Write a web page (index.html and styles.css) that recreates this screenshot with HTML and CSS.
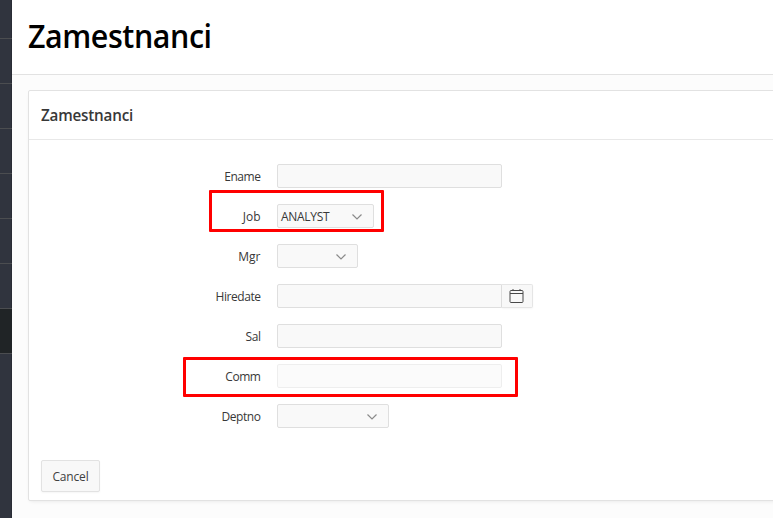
FILE: index.html
```html
<!DOCTYPE html>
<html lang="sk">
<head>
<meta charset="utf-8">
<title>Zamestnanci</title>
<link rel="stylesheet" href="styles.css">
</head>
<body>
<nav class="sidebar">
  <div class="nav-item first"></div>
  <div class="nav-item"></div>
  <div class="nav-item"></div>
  <div class="nav-item"></div>
  <div class="nav-item"></div>
  <div class="nav-item"></div>
  <div class="nav-item"></div>
  <div class="nav-item active"></div>
</nav>
<main class="main">
  <header class="title-bar"><h1>Zamestnanci</h1></header>
  <section class="region">
    <div class="region-header"><h2>Zamestnanci</h2></div>
    <form class="form">
      <div class="row"><label>Ename</label><div class="field"></div></div>
      <div class="row"><label class="wide">Job</label><div class="field select job"><span>ANALYST</span><svg class="chevron" viewBox="0 0 10 6"><path d="M.5.5 5 5 9.500.5"/></svg></div><div class="marker marker-job"></div></div>
      <div class="row"><label class="wide">Mgr</label><div class="field select mgr"><svg class="chevron" viewBox="0 0 10 6"><path d="M.5.5 5 5 9.500.5"/></svg></div></div>
      <div class="row"><label>Hiredate</label><div class="field date"></div><div class="picker"><svg viewBox="0 0 15 15"><path d="M2 2.500h11q1 0 1 1v10q0 1-1 1h-11q-1 0-1-1v-10q0-1 1-1zM1 5.500h13M4 1v2M11 1v2"/></svg></div></div>
      <div class="row"><label>Sal</label><div class="field"></div></div>
      <div class="row"><label>Comm</label><div class="field disabled"></div><div class="marker marker-comm"></div></div>
      <div class="row"><label>Deptno</label><div class="field select dept"><svg class="chevron" viewBox="0 0 10 6"><path d="M.5.5 5 5 9.500.5"/></svg></div></div>
    </form>
    <div class="buttons"><button type="button">Cancel</button></div>
  </section>
</main>
</body>
</html>
```
FILE: styles.css
```css
* { box-sizing: border-box; }
body {
  margin: 0;
  height: 518px;
  display: flex;
  overflow: hidden;
  background: #fcfcfc;
  color: #383838;
  font: 12px/16px "Open Sans", "Noto Sans", sans-serif;
}
.sidebar { width: 12px; flex: none; background: #30343e; box-shadow: inset -1px 0 #292c35; }
.nav-item { height: 45px; border-bottom: 1px solid #4b4d50; }
.nav-item.first { height: 39px; }
.nav-item.active { background: #202426; }
.main { flex: 1; min-width: 0; }
.title-bar {
  height: 75px;
  padding: 14px 16px 0;
  background: #fff;
  border-bottom: 1px solid #e2e2e2;
}
h1 { margin: 0; font-size: 32px; line-height: 44px; font-weight: 600; color: #000; letter-spacing: -.45px; transform: scaleX(.95); transform-origin: left; }
.region {
  height: 411px;
  margin: 15px -10px 0 16px;
  background: #fff;
  border: 1px solid #e2e2e2;
  border-radius: 2px;
  box-shadow: 0 2px 4px -2px rgba(0, 0, 0, .1);
}
.region-header { height: 49px; padding: 12px 12px 0; border-bottom: 1px solid #e8e8e8; }
h2 { margin: 0; font-size: 16px; line-height: 24px; font-weight: 600; letter-spacing: -.2px; transform: scaleX(.95); transform-origin: left; }
.form { padding-top: 16px; }
.row { position: relative; height: 40px; display: flex; align-items: center; }
.row label { width: 231.5px; margin-right: 16.5px; text-align: right; padding-top: 1px; letter-spacing: -.45px; }
.row label.wide { letter-spacing: 0; }
.field {
  width: 225px;
  height: 24px;
  background: #f9f9f9;
  border: 1px solid #dfdfdf;
  border-radius: 2px;
}
.select { display: flex; align-items: center; padding: 0 11px 0 3px; }
.select span { letter-spacing: -.3px; padding-top: 1px; }
.job { width: 97px; }
.mgr { width: 81px; }
.dept { width: 112px; }
.date { border-radius: 2px 0 0 2px; }
.disabled { opacity: .5; }
.chevron { width: 10px; height: 6px; margin: 1px 0 0 auto; fill: none; stroke: #8b8b8b; stroke-width: 1.2; }
.picker {
  width: 31px;
  height: 24px;
  display: flex;
  padding: 3px 0 0 7px;
  background: #f8f8f8;
  border: 1px solid #e5e5e5;
  border-left: 0;
  border-radius: 0 2px 2px 0;
  box-shadow: 0 1px 2px rgba(0, 0, 0, .04);
}
.picker svg { width: 15px; height: 15px; fill: none; stroke: #484848; stroke-width: 1; }
.marker { position: absolute; border: 3px solid #f00; border-radius: 1px; }
.marker-job { left: 180px; top: -6px; width: 175px; height: 42px; }
.marker-comm { left: 154px; top: 1px; width: 335px; height: 40px; }
.buttons { padding: 24px 12px 0; }
button {
  display: block;
  width: 59px;
  height: 32px;
  padding: 1px 0 0;
  font: inherit;
  letter-spacing: -.15px;
  color: #404040;
  background: #f8f8f8;
  border: 1px solid #e2e2e2;
  border-radius: 2px;
  box-shadow: 0 1px 2px rgba(0, 0, 0, .04);
}
```
